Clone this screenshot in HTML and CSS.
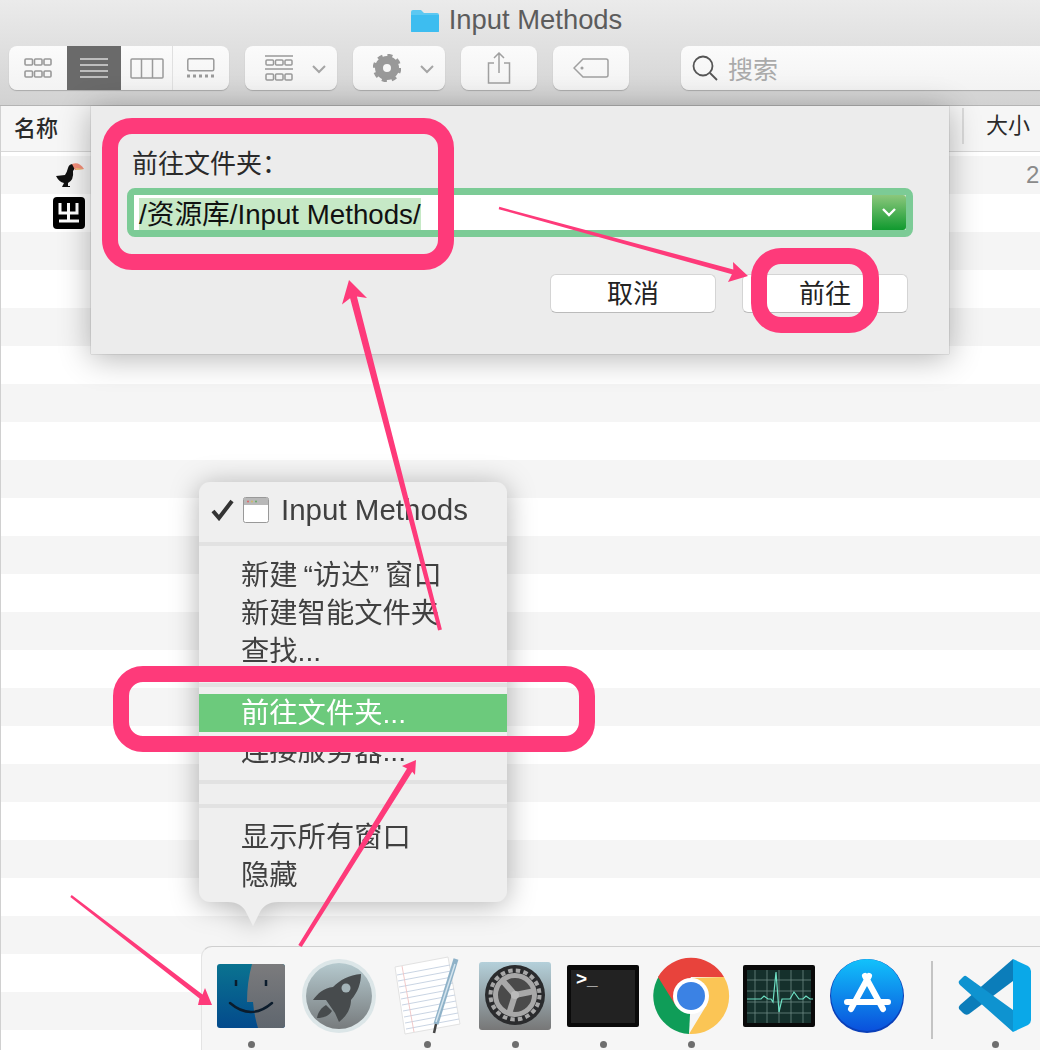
FILE: index.html
```html
<!DOCTYPE html>
<html lang="zh-CN">
<head>
<meta charset="utf-8">
<title>Input Methods</title>
<link rel="stylesheet" href="styles.css">
</head>
<body>
<div class="screen">
  <div class="finder">
    <header class="chrome">
      <div class="titlebar">
        <svg class="folder" viewBox="0 0 30 24"><path d="M1 3q0-2 2-2h8l3 3h13q2 0 2 2v16q0 1-1 1H2q-1 0-1-1z" fill="#5cc8f2"/><path d="M1 6h28v16q0 1-1 1H2q-1 0-1-1z" fill="#3dbdf0"/></svg>
        <span class="title">Input Methods</span>
      </div>
      <div class="toolbar">
        <div class="seg">
          <div class="seg-item w58"><svg width="28" height="20" viewBox="0 0 28 20" fill="none" stroke="#999" stroke-width="1.6"><rect x="1" y="1" width="7.500" height="6" rx="1"/><rect x="10.500" y="1" width="7.500" height="6" rx="1"/><rect x="20" y="1" width="7" height="6" rx="1"/><rect x="1" y="13" width="7.500" height="6" rx="1"/><rect x="10.500" y="13" width="7.500" height="6" rx="1"/><rect x="20" y="13" width="7" height="6" rx="1"/></svg></div>
          <div class="seg-item w54 active"><svg width="28" height="22" viewBox="0 0 28 22" stroke="#d9d9d9" stroke-width="1.6"><path d="M0 2h28M0 8h28M0 14h28M0 20h28"/></svg></div>
          <div class="seg-item w52 divided"><svg width="34" height="21" viewBox="0 0 34 21" fill="none" stroke="#9a9a9a" stroke-width="1.5"><rect x="1" y="1" width="32" height="19" rx="1"/><path d="M11.500 1v19M22.500 1v19"/></svg></div>
          <div class="seg-item w56"><svg width="28" height="20" viewBox="0 0 28 20"><rect x=".8" y=".8" width="26" height="12" rx="1.500" fill="none" stroke="#9a9a9a" stroke-width="1.500"/><path d="M0 18h3M6 18h3M12 18h3M18 18h3M24 18h3" stroke="#9a9a9a" stroke-width="3"/></svg></div>
        </div>
        <div class="btn w92"><svg width="28" height="27" viewBox="0 0 28 27" fill="none" stroke="#999" stroke-width="1.500"><path d="M0 1h28M0 14h28"/><rect x="1" y="5" width="7.500" height="5" rx="1"/><rect x="10.500" y="5" width="7.500" height="5" rx="1"/><rect x="20" y="5" width="7" height="5" rx="1"/><rect x="1" y="19" width="7.500" height="6" rx="1"/><rect x="10.500" y="19" width="7.500" height="6" rx="1"/><rect x="20" y="19" width="7" height="6" rx="1"/></svg><svg class="chev" width="14" height="9" viewBox="0 0 14 9" fill="none" stroke="#a5a5a5" stroke-width="2"><path d="M1 1l6 6 6-6"/></svg></div>
        <div class="btn w92"><svg width="28" height="28" viewBox="0 0 28 28"><circle cx="14" cy="14" r="8" fill="none" stroke="#999" stroke-width="8"/><circle cx="14" cy="14" r="12.500" fill="none" stroke="#999" stroke-width="3.500" stroke-dasharray="5 4.820"/></svg><svg class="chev" width="14" height="9" viewBox="0 0 14 9" fill="none" stroke="#a5a5a5" stroke-width="2"><path d="M1 1l6 6 6-6"/></svg></div>
        <div class="btn w76"><svg width="24" height="32" viewBox="0 0 24 32" fill="none" stroke="#a0a0a0" stroke-width="1.500"><path d="M7 11H1.500v20h21V11H17M12 21V1M7 6l5-5 5 5"/></svg></div>
        <div class="btn w76"><svg width="36" height="20" viewBox="0 0 36 20" fill="none" stroke="#a0a0a0" stroke-width="1.500"><path d="M10 1h23q2 0 2 2v14q0 2-2 2H10L1 10z"/><circle cx="9" cy="10" r=".8" fill="#a0a0a0"/></svg></div>
        <div class="search"><svg width="26" height="26" viewBox="0 0 26 26" fill="none" stroke="#555" stroke-width="1.800"><circle cx="11" cy="11" r="9.500"/><path d="M18 18l7 7"/></svg><span>搜索</span></div>
      </div>
    </header>
    <div class="columns"><span class="col-name">名称</span><span class="col-size">大小</span></div>
    <div class="rows">
      <div class="row">
        <svg class="app" width="32" height="28" viewBox="0 0 32 28"><path d="M3 15l9-1q2-3 3-7 1-4 5-4l2 4-2 3q1 9-5 12v3h2v1H9l2-4q-5-1-8-7z" fill="#111"/><path d="M19 3q7-3 12 5l-9 1z" fill="#f58e7a"/><path d="M22 7l9 1-7 1z" fill="#f0c878"/></svg>
        <span class="row-size">2</span>
      </div>
      <div class="row">
        <svg class="app" width="32" height="32" viewBox="0 0 32 32"><rect width="32" height="32" rx="4" fill="#000"/><path d="M7 6v10h17V6M15.500 6v18M6 24h20" fill="none" stroke="#fff" stroke-width="3"/></svg>
      </div>
    </div>
  </div>

  <section class="sheet">
    <div class="sheet-label">前往文件夹：</div>
    <div class="combo">
      <div class="combo-field"><span class="selection">/资源库/Input Methods/</span></div>
      <div class="combo-btn"><svg width="14" height="9" viewBox="0 0 14 9" fill="none" stroke="#fff" stroke-width="2.400"><path d="M1 1l6 6 6-6"/></svg></div>
    </div>
    <div class="sheet-actions">
      <button class="action">取消</button>
      <button class="action">前往</button>
    </div>
  </section>

  <nav class="menu">
    <div class="menu-item window-item">
      <svg class="check" width="24" height="22" viewBox="0 0 24 22" fill="none" stroke="#333" stroke-width="4"><path d="M2 12l6 7L21 2"/></svg>
      <svg class="winicon" width="26" height="26" viewBox="0 0 26 26"><rect x=".5" y=".5" width="25" height="25" rx="2" fill="#fff" stroke="#999"/><rect x="1" y="1" width="24" height="7" fill="#b8b8b8"/><circle cx="5" cy="4.500" r="1" fill="#d66"/><circle cx="9" cy="4.500" r="1" fill="#cb6"/><circle cx="13" cy="4.500" r="1" fill="#6a6"/></svg>
      <span>Input Methods</span>
    </div>
    <div class="sep s13"></div>
    <div class="menu-item">新建<span class="q-open">“</span>访达<span class="q-close">”</span>窗口</div>
    <div class="menu-item">新建智能文件夹</div>
    <div class="menu-item">查找...</div>
    <div class="sep s13b"></div>
    <div class="menu-item hot">前往文件夹...</div>
    <div class="menu-item">连接服务器...</div>
    <div class="sep s10"></div>
    <div class="sep s20"></div>
    <div class="menu-item">显示所有窗口</div>
    <div class="menu-item">隐藏</div>
    <svg class="tail" width="50" height="24" viewBox="0 0 50 24"><path d="M0 0q14 0 19 12l6 12 6-12q5-12 19-12z" fill="#efefef"/></svg>
  </nav>

  <footer class="dock">
    <div class="dock-item">
      <svg class="dock-icon" viewBox="0 0 80 80"><defs><linearGradient id="fb" x1="0" y1="0" x2="0" y2="1"><stop offset="0" stop-color="#0a7390"/><stop offset="1" stop-color="#034a8c"/></linearGradient><linearGradient id="fg" x1="0" y1="0" x2="0" y2="1"><stop offset="0" stop-color="#7b7b7d"/><stop offset="1" stop-color="#5f666e"/></linearGradient></defs><rect x="6" y="8" width="68" height="64" rx="3" fill="url(#fb)"/><path d="M41 8h30q3 0 3 3v58q0 3-3 3H47q-4-13-5-26h-6q0-20 5-38z" fill="url(#fg)"/><path d="M25 24v6M55 24v6" stroke="#0b1c2c" stroke-width="2.500"/><path d="M19 47q21 18 42 0" fill="none" stroke="#0b1c2c" stroke-width="2.500" stroke-linecap="round"/></svg>
      <i class="dot"></i>
    </div>
    <div class="dock-item">
      <svg class="dock-icon" viewBox="0 0 80 80"><defs><linearGradient id="lp" x1="0" y1="0" x2="0" y2="1"><stop offset="0" stop-color="#b5c9ce"/><stop offset="1" stop-color="#777b7d"/></linearGradient></defs><circle cx="40" cy="40" r="37" fill="#dce6e8"/><circle cx="40" cy="40" r="33" fill="url(#lp)"/><path d="M62 18C50 19 41 24 34 31 25 32 19 37 14 44L27 44 36 57 40 66C48 60 52 52 52 44 59 36 62 27 62 18z" fill="#474b4d"/><path d="M27 49L33 55C30 60 24 62 18 62 19 56 22 52 27 49z" fill="#474b4d"/><circle cx="47" cy="32" r="4.500" fill="#a4b4b8"/></svg>
    </div>
    <div class="dock-item">
      <svg class="dock-icon" viewBox="0 0 80 80"><polygon points="8,11 61,1 73,68 18,78" fill="#fff" stroke="#e2e2e2"/><path d="M10 19l53-10M11 25l53-10M12 31l53-10M13 37l53-10M14 43l53-10M15 49l53-10M16 55l53-10M17 61l53-10M18 67l53-10M19 73l53-10" stroke="#c3cfe0" stroke-width=".9"/><path d="M15 10l12 66" stroke="#efc4c4" stroke-width=".9"/><path d="M69 3L49 68" stroke="#8fb2c8" stroke-width="5"/><path d="M49 68l-2 9" stroke="#444" stroke-width="2.500"/><path d="M68 8L49 66" stroke="#d4e4ee" stroke-width="1.500"/></svg>
      <i class="dot"></i>
    </div>
    <div class="dock-item">
      <svg class="dock-icon" viewBox="0 0 80 80"><defs><linearGradient id="sp" x1="0" y1="0" x2="0" y2="1"><stop offset="0" stop-color="#b4d0da"/><stop offset="1" stop-color="#777"/></linearGradient></defs><rect x="4" y="6" width="72" height="68" rx="3" fill="url(#sp)"/><circle cx="40" cy="39" r="30" fill="#2a2b2d"/><circle cx="40" cy="39" r="24.500" fill="none" stroke="#a8a8a8" stroke-width="4" stroke-dasharray="4.500 3.200"/><circle cx="40" cy="39" r="19.500" fill="#4a4a4a" stroke="#a8a8a8" stroke-width="5"/><path d="M40 39L27 24M40 39l20-4M40 39l-6 19" stroke="#a8a8a8" stroke-width="6"/><circle cx="40" cy="39" r="4" fill="#bbb"/></svg>
      <i class="dot"></i>
    </div>
    <div class="dock-item">
      <svg class="dock-icon" viewBox="0 0 80 80"><rect x="4" y="9" width="72" height="62" rx="2" fill="#0a0a0a"/><rect x="8" y="14" width="64" height="53" fill="#222"/><text class="prompt" x="13" y="29">&gt;_</text></svg>
      <i class="dot"></i>
    </div>
    <div class="dock-item">
      <svg class="dock-icon" viewBox="0 0 80 80"><path d="M40 40L8 20A38 38 0 0 0 38 78z" fill="#0f9d58"/><path d="M7 21A38 38 0 0 1 73 21H40L24.400 49z" fill="#e8433c"/><path d="M73 21A38 38 0 0 1 38 78L55.600 49 40 22z" fill="#fbc555"/><path d="M24 48h32L40 22z" fill="#fbc555"/><circle cx="40" cy="40" r="18" fill="#fff"/><circle cx="40" cy="40" r="14" fill="#3b82e4"/></svg>
      <i class="dot"></i>
    </div>
    <div class="dock-item">
      <svg class="dock-icon" viewBox="0 0 80 80"><rect x="4" y="9" width="72" height="62" rx="2" fill="#0a0a0a"/><rect x="8" y="14" width="64" height="53" fill="#15302c"/><path d="M8 24h64M8 35h64M8 46h64M8 57h64M16 14v53M28 14v53M40 14v53M52 14v53M64 14v53" stroke="#6d8883" stroke-width=".8"/><path d="M8 43h14l3-3 4 3h3l2 3 3-30 3 40 3-13h8l4-7 5 7 4 0 3-3 4 3h3" fill="none" stroke="#6fe0c4" stroke-width="1.200"/></svg>
    </div>
    <div class="dock-item">
      <svg class="dock-icon" viewBox="0 0 80 80"><defs><linearGradient id="as" x1="0" y1="0" x2="0" y2="1"><stop offset="0" stop-color="#12c2fb"/><stop offset="1" stop-color="#0a50dc"/></linearGradient></defs><circle cx="40" cy="40" r="37" fill="#0a3fb8"/><circle cx="40" cy="39" r="36" fill="url(#as)"/><path d="M42 20L24 53M38 20l18 33M20 46h41" stroke="#fff" stroke-width="6" stroke-linecap="round"/></svg>
    </div>
    <div class="dock-sep"></div>
    <div class="dock-item">
      <svg class="dock-icon" viewBox="0 0 80 80"><path d="M58 3v22L14 58q-3 2-6-1l-4-4q-1-2 1-4z" fill="#0b7dba"/><path d="M11 20l47 34v22L5 29q-2-2-1-4l4-4q2-2 3-1z" fill="#0e93d0"/><path d="M58 3l15 7q3 2 3 5v49q0 3-3 5l-15 7z" fill="#0aa8e8"/></svg>
      <i class="dot"></i>
    </div>
  </footer>

  <svg class="marks" width="1040" height="1050" viewBox="0 0 1040 1050">
    <g class="ring"><rect x="110" y="126" width="336" height="136" rx="22"/><rect x="759" y="256" width="112" height="69" rx="22"/><rect x="121" y="674" width="466" height="70" rx="22"/></g>
    <g class="arrow">
      <polygon points="349,280 367,298 356.900,296.500 441.900,629.500 438.100,630.500 350.100,298.300 342,304.600"/>
      <polygon points="748,276 733,262 733.300,269.400 499.300,206.800 498.700,209.200 731.900,274.200 728,282"/>
      <polygon points="416,760 415,775 412.200,771.800 301.700,947.100 298.300,944.900 407,768.600 402,766"/>
      <polygon points="212,1005 205,988 202.500,994.400 71.700,895 70.300,897 199.500,998.400 198,1005"/>
    </g>
  </svg>
</div>
</body>
</html>
```
FILE: styles.css
```css
* { box-sizing: border-box; }
html, body { margin: 0; padding: 0; }
body { font-family: "Liberation Sans", "Noto Sans CJK SC", sans-serif; color: #222; background: #fff; }
.screen { position: relative; width: 1040px; height: 1050px; overflow: hidden; }

.finder { display: flex; flex-direction: column; height: 100%; border-left: 1px solid #d0d0d0; }
.chrome { height: 106px; background: linear-gradient(#ebebeb, #d2d2d2); border-bottom: 1px solid #b4b4b4; flex: none; margin-left: -1px; }
.titlebar { height: 46px; display: flex; align-items: center; justify-content: center; gap: 9px; padding: 0 8px 6px 0; }
.folder { width: 30px; height: 24px; margin-top: 1px; }
.title { font-size: 27.4px; color: #5c5c5c; }
.toolbar { display: flex; gap: 16px; padding-left: 9px; height: 44px; }
.seg, .btn, .search { height: 44px; background: linear-gradient(#fbfbfb, #f3f3f3); border-radius: 8px; box-shadow: 0 1px 1px #aaa; }
.seg { display: flex; width: 220px; overflow: hidden; }
.seg-item { display: flex; align-items: center; justify-content: center; height: 44px; }
.w58 { width: 58px; } .w54 { width: 54px; } .w52 { width: 52px; } .w56 { width: 56px; }
.active { background: #6a6a6a; height: 46px; margin-top: -1px; }
.divided { border-right: 1px solid #e0e0e0; }
.btn { display: flex; align-items: center; justify-content: center; gap: 19px; }
.w92 { width: 92px; padding-left: 8px; } .w76 { width: 76px; }
.chev { margin-top: 2px; }
.search { flex: 1; margin-left: 36px; margin-right: -10px; display: flex; align-items: center; gap: 10px; padding-left: 11px; font-size: 25px; color: #aaa; }

.columns { height: 46px; flex: none; display: flex; justify-content: space-between; align-items: center; padding: 0 10px 6px 13px; background: #f6f6f6; border-bottom: 1px solid #d8d8d8; font-size: 22px; color: #2a2a2a; }
.col-name { font-weight: 500; }
.col-size { border-left: 2px solid #dcdcdc; padding-left: 22px; line-height: 36px; }
.rows { flex: 1; margin-top: 4px; background: repeating-linear-gradient(#f5f5f5 0 38px, #fff 38px 76px); }
.row { height: 38px; display: flex; align-items: center; justify-content: space-between; padding-left: 52px; }
.row-size { font-size: 24px; color: #8a8a8a; width: 14px; overflow: hidden; }

.sheet { position: absolute; left: 91px; top: 106px; width: 858px; height: 248px; background: #ececec; box-shadow: 0 4px 30px rgba(0,0,0,.3), 0 0 1px #999; padding: 41px 36px 0 36px; display: flex; flex-direction: column; }
.sheet-label { font-size: 26px; line-height: 34px; color: #2a2a2a; height: 41px; margin-left: 5px; }
.combo { display: flex; height: 49px; border: 7px solid #7ccb96; border-radius: 8px; width: 786px; }
.combo-field { flex: 1; background: #fff; padding: 3px 0 0 5px; overflow: hidden; }
.selection { display: inline-block; height: 32px; line-height: 33px; background: #c6e9c6; font-size: 27.7px; color: #111; white-space: nowrap; }
.combo-btn { width: 34px; background: linear-gradient(#8cc77c, #109a2f); display: flex; align-items: center; justify-content: center; border-radius: 0 3px 3px 0; }
.sheet-actions { display: flex; gap: 26px; justify-content: flex-end; margin-top: 37px; padding-right: 5px; }
.action { width: 166px; height: 39px; background: #fff; border: 1px solid #d4d4d4; border-bottom-color: #bbb; border-radius: 6px; font: 26px/26px "Liberation Sans", "Noto Sans CJK SC", sans-serif; color: #222; padding: 0; }

.menu { position: absolute; left: 199px; top: 482px; width: 308px; height: 420px; background: #efefef; border-radius: 11px; padding: 9px 0 0; filter: drop-shadow(0 3px 14px rgba(0,0,0,.3)); font-size: 28.3px; color: #404040; }
.menu-item { height: 38px; line-height: 39px; padding-left: 42px; white-space: nowrap; }
.q-open { margin-left: 6px; }
.q-close { margin-right: 6px; }
.window-item { display: flex; align-items: center; padding-left: 12px; font-size: 29.5px; line-height: 36px; }
.winicon { margin: 0 12px 0 8px; }
.sep { height: 4px; background: #e2e2e2; }
.s13 { margin: 13px 0 10px; }
.s13b { margin: 13px 0 7px; }
.s10 { margin-top: 10px; }
.s20 { margin: 20px 0 10px; }
.hot { background: #6cca7c; color: #fff; }
.tail { position: absolute; left: 29px; bottom: -24px; }

.dock { position: absolute; left: 201px; top: 946px; width: 860px; height: 120px; background: #f6f6f6; border-radius: 11px 0 0 0; border-top: 1px solid #cfcfcf; border-left: 1px solid #e4e4e4; padding: 9px 0 0 5px; display: flex; }
.dock-item { width: 88px; display: flex; flex-direction: column; align-items: center; flex: none; }
.dock-icon { width: 80px; height: 80px; display: block; }
.dot { width: 7px; height: 7px; margin-top: 5px; border-radius: 50%; background: #6e6e6e; }
.dock-sep { width: 2px; height: 78px; margin: 5px 18px 0 20px; background: #c4c4c4; flex: none; }
.prompt { font: bold 19px "Liberation Sans", sans-serif; fill: #fff; }

.marks { position: absolute; left: 0; top: 0; pointer-events: none; }
.ring rect { fill: none; stroke: #fe3a7a; stroke-width: 16; }
.arrow polygon { fill: #fe3a7a; }
```
